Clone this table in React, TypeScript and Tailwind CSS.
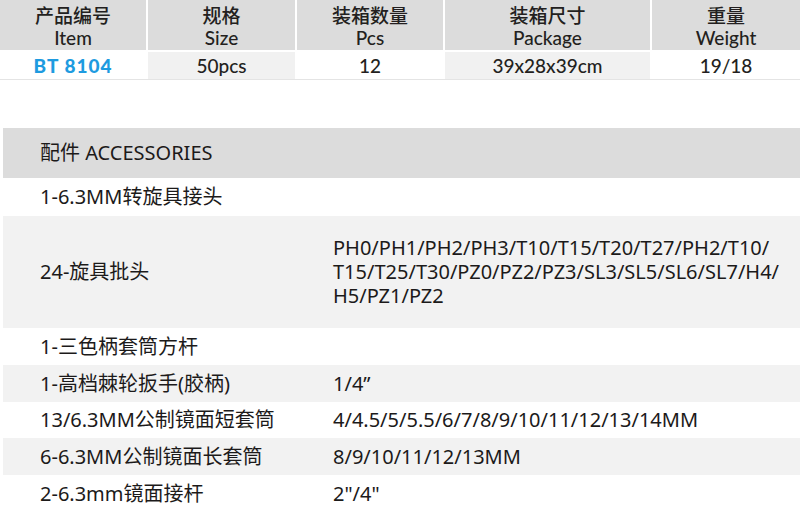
import React from 'react';

const FONT = '"Noto Sans", "Noto Sans CJK SC", sans-serif';
const HEAD_FONT = '"Lato", "Noto Sans CJK SC", sans-serif';

const specCols = [
  { zh: '产品编号', en: 'Item', value: 'BT 8104', w: 'w-[146px]', shade: false },
  { zh: '规格', en: 'Size', value: '50pcs', w: 'w-[147px]', shade: true },
  { zh: '装箱数量', en: 'Pcs', value: '12', w: 'w-[146px]', shade: false },
  { zh: '装箱尺寸', en: 'Package', value: '39x28x39cm', w: 'w-[205px]', shade: true },
  { zh: '重量', en: 'Weight', value: '19/18', w: 'flex-1', shade: false },
];

const accessories = [
  { name: '1-6.3MM转旋具接头', value: '', h: 'h-[38px]', shade: false },
  {
    name: '24-旋具批头',
    value: 'PH0/PH1/PH2/PH3/T10/T15/T20/T27/PH2/T10/\nT15/T25/T30/PZ0/PZ2/PZ3/SL3/SL5/SL6/SL7/H4/\nH5/PZ1/PZ2',
    h: 'h-[112px]',
    shade: true,
  },
  { name: '1-三色柄套筒方杆', value: '', h: 'h-[37px]', shade: false },
  { name: '1-高档棘轮扳手(胶柄)', value: '1/4”', h: 'h-[37px]', shade: true },
  { name: '13/6.3MM公制镜面短套筒', value: '4/4.5/5/5.5/6/7/8/9/10/11/12/13/14MM', h: 'h-[36px]', shade: false },
  { name: '6-6.3MM公制镜面长套筒', value: '8/9/10/11/12/13MM', h: 'h-[37px]', shade: true },
  { name: '2-6.3mm镜面接杆', value: '2"/4"', h: 'h-[38px]', shade: false },
];

export default function App() {
  return (
    <div className="w-[800px] h-[513px] overflow-hidden bg-white text-[#1c1a1a]">
      {/* spec table */}
      <div className="flex flex-col">
        <div className="flex gap-[2px]">
          {specCols.map(c => (
            <div
              key={c.en}
              className={`${c.w} h-[50px] pt-[4px] bg-[#dcdcdc] flex flex-col items-center justify-center text-[19px] leading-[22px] font-medium text-[#231f20]`}
              style={{ fontFamily: HEAD_FONT }}
            >
              <span>{c.zh}</span>
              <span>{c.en}</span>
            </div>
          ))}
        </div>
        <div className="flex gap-[2px] mt-[2px] border-b border-[#e4e4e4]">
          {specCols.map((c, i) => (
            <div
              key={c.en}
              className={`${c.w} h-[27px] pt-[1px] flex items-center justify-center text-[19px] ${c.shade ? 'bg-[#f1f1f1]' : 'bg-white'} ${i === 0 ? 'text-[#1e9be0] font-black tracking-[1px]' : 'text-[#231f20] font-medium'}`}
              style={{ fontFamily: HEAD_FONT }}
            >
              {c.value}
            </div>
          ))}
        </div>
      </div>

      {/* accessories */}
      <div className="ml-[3px] mt-[48px]" style={{ fontFamily: FONT }}>
        <div className="h-[50px] bg-[#dcdcdc] flex items-center pl-[37px] text-[20px]">
          配件 ACCESSORIES
        </div>
        {accessories.map(a => (
          <div key={a.name} className={`${a.h} flex items-center text-[20px] ${a.shade ? 'bg-[#f2f2f2]' : 'bg-white'}`}>
            <div className="w-[330px] pl-[37px] shrink-0">{a.name}</div>
            <div className="whitespace-pre leading-[24px]">{a.value}</div>
          </div>
        ))}
      </div>
    </div>
  );
}
